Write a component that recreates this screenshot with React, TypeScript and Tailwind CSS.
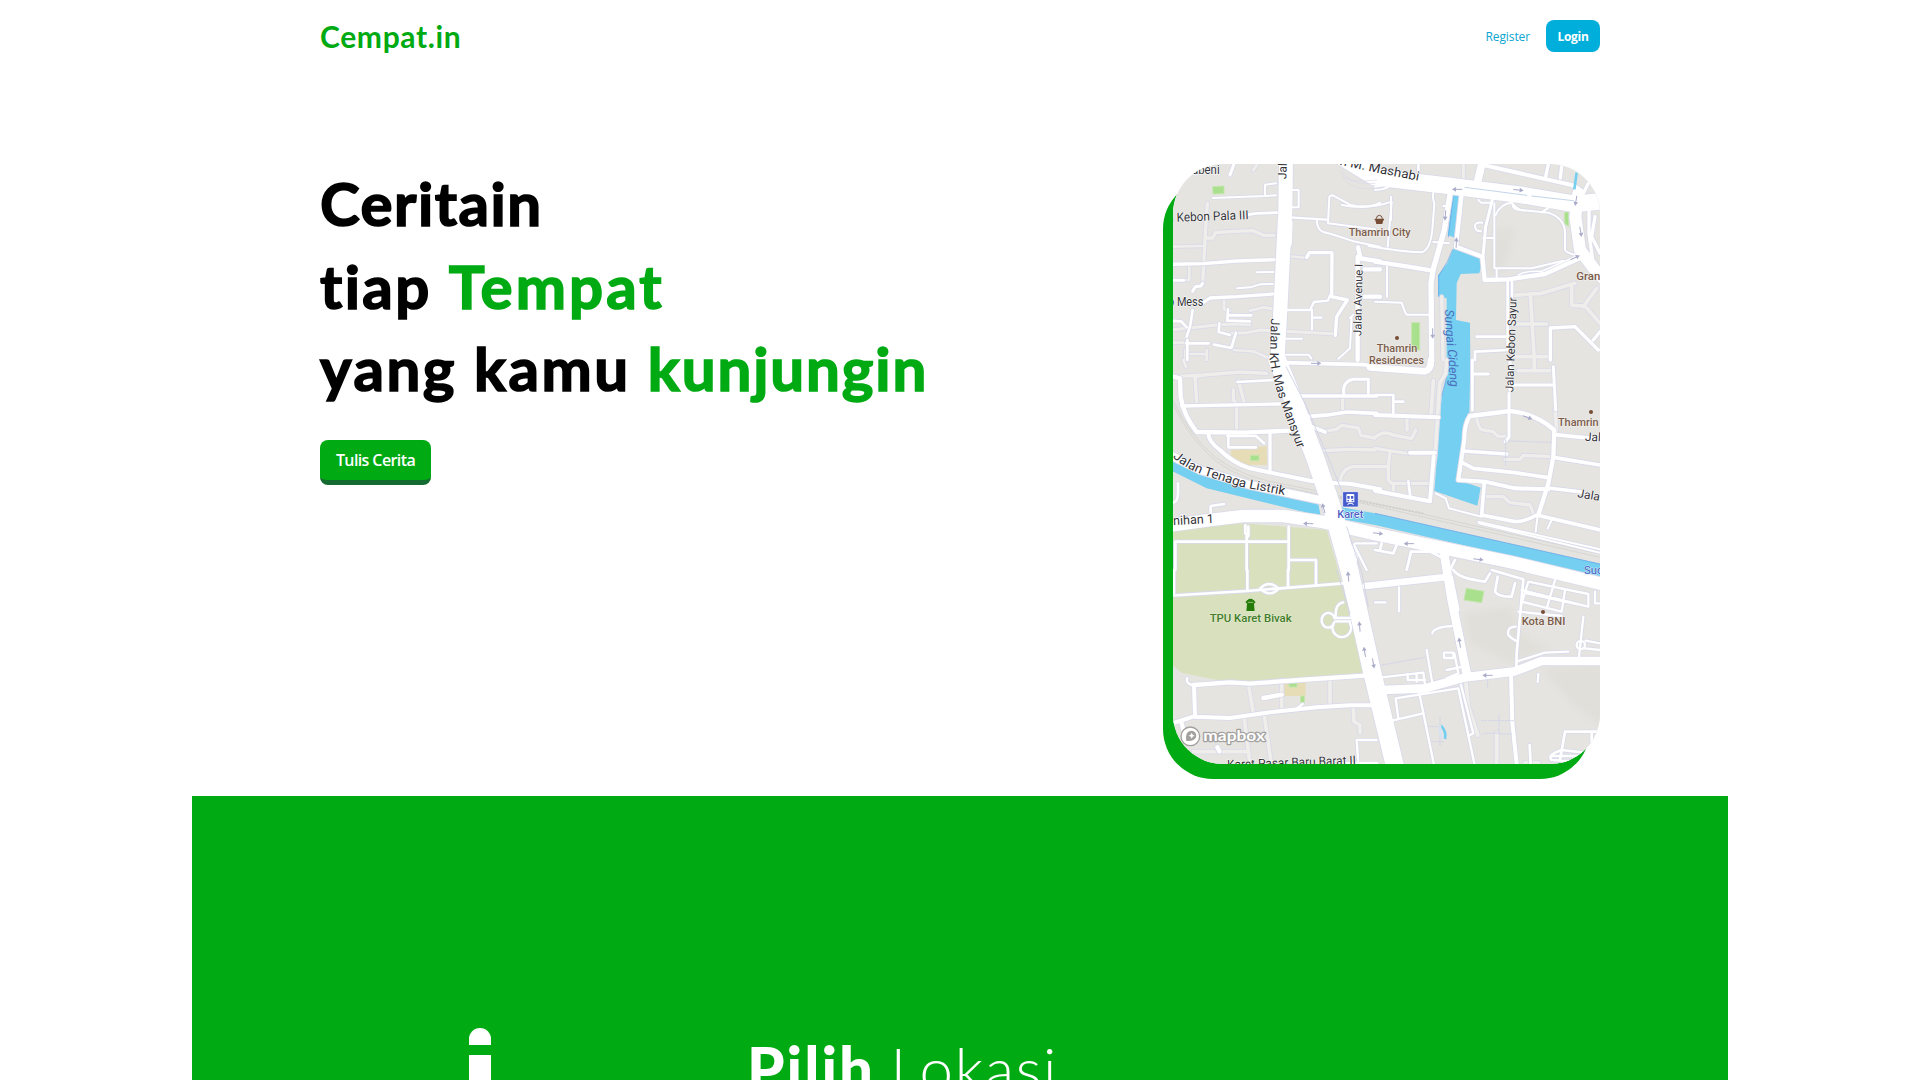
import React from "react";

type Road = [number, string];

/* Map units: three per CSS pixel. Roads are split into six tiles for readability. */
const tiles: { x: number; y: number; minor: Road[]; roads: Road[] }[] = [
  {
    x: 0,
    y: 0,
    minor: [
      [10, "M172 160L166 250L158 400"],
      [10, "M170 264H188L196 248L250 244L310 242L340 256H372"],
      [8, "M60 290L155 288"],
      [8, "M118 346V390H100"],
      [8, "M414 318L470 324L476 308"],
      [9, "M222 445V478L240 482M300 482L340 472L365 476"],
      [9, "M60 540L110 535L200 525L245 522L300 524M245 550L290 548L330 540L560 552"],
      [8, "M60 578H110M250 600L310 604L350 622M106 600V630M170 600V630M110 612H170"],
      [9, "M310 60L322 42L326 30"],
    ],
    roads: [
      [6, "M188 144L345 138L378 136"],
      [6, "M345 136V104L378 100"],
      [6, "M425 120H446V172H424"],
      [8, "M295 194L320 190L380 188"],
      [7, "M420 202L530 209"],
      [6, "M675 238L534 220L538 140Q546 132 556 140L600 164Q650 178 690 158"],
      [6, "M500 210Q502 240 520 246Q560 256 610 274L690 290"],
      [10, "M60 343L160 341L260 333L372 329"],
      [6, "M320 367L370 366M262 415L300 412L330 403L368 402"],
      [10, "M160 458L180 444L260 440L368 432"],
      [9, "M60 391H102M158 400L152 408L136 410L128 424"],
      [7, "M410 480H480L492 456L534 452L540 436M486 480V538M488 503H514"],
      [10, "M470 322L478 308H546L545 440L592 450L560 500L556 556"],
      [8, "M234 478L232 512L300 514M236 496H304M208 520L206 546L240 555M258 548L244 594L192 584M112 570V630M108 580H176M60 512L94 514L110 532M128 480L120 530L110 560"],
      [6, "M408 566H456M408 614H476L484 625"],
      [13, "M630 318L624 292M625 324L690 334M623 320V630M644 358H690M644 440H690"],
      [6, "M425 215L423 280L414 300M600 504L610 494M605 500L600 595L565 626"],
      [9, "M240 75L252 42"],
    ],
  },
  {
    x: 675,
    y: 0,
    minor: [
      [9, "M265 40V100"],
      [11, "M410 436L500 430L600 400M466 430L478 630M410 522H515M410 620H525M590 410V466L630 468L675 520M625 470L665 415"],
      [10, "M200 440L204 630"],
    ],
    roads: [
      [23, "M322 35L305 106"],
      [12, "M325 45L590 105L610 115"],
      [10, "M520 42L512 80M560 48L556 84M640 100L620 140M665 140L650 165"],
      [13, "M0 335L100 350L172 362"],
      [16, "M228 115L208 240L174 360L168 400L170 630"],
      [13, "M260 130L243 290L322 320L329 390L400 388L510 372L620 322"],
      [9, "M352 150L332 230L324 320"],
      [6, "M175 276L222 280"],
      [6, "M177 122Q170 140 178 160L172 240Q165 300 140 307Q80 305 -20 288M205 168H218"],
      [6, "M358 160V355H470L565 332M365 385V355M310 150L318 158H350M322 218Q298 216 300 230Q302 245 318 244M325 264H355"],
      [6, "M362 195Q376 160 412 158Q410 180 440 180L520 188Q570 205 570 250V300Q578 310 600 314M412 160Q430 182 450 182M500 187L525 170"],
      [6, "M-100 165Q-20 180 50 155M50 155L38 290M48 140V210"],
      [6, "M0 120Q40 120 65 92M0 110Q30 108 45 92M130 45V65"],
      [6, "M36 350V440M0 455L80 458Q90 490 95 494H165"],
      [8, "M398 394V600L300 605V630M411 390V440M305 560H395"],
      [10, "M526 630V534L600 530L670 600M675 545L655 570"],
      [10, "M655 345L642 250V180Q650 168 675 170M660 200L650 260L675 310"],
      [5, "M430 375Q450 362 500 364L600 320"],
      [7, "M130 42V65"],
    ],
  },
  {
    x: 0,
    y: 630,
    minor: [
      [10, "M70 50L160 45L270 36L350 40M160 45L135 50L140 125M250 90L250 120L260 130V205M265 60L282 125"],
      [10, "M520 214L560 208L575 196L625 204L632 226L675 234M520 272L600 268L675 270M570 365Q575 325 610 320H675M578 155V100"],
      [9, "M100 0L108 20"],
    ],
    roads: [
      [13, "M50 45L90 55L92 110Q100 165 140 216L280 218L420 212"],
      [10, "M95 138L390 132"],
      [8, "M262 66L370 60"],
      [8, "M232 228H318L342 250M235 226V262H318"],
      [10, "M360 215V330"],
      [12, "M176 216Q170 240 210 270Q250 310 300 325L480 362L560 370L600 371L690 388"],
      [11, "M400 8L640 14L690 22M450 108H680M470 170Q530 168 590 156L680 160M485 200L525 216"],
      [9, "M582 105Q575 65 610 58H655V100"],
      [8, "M84 370V400Q84 425 68 428M182 465V438L222 432M95 470V465"],
      [8, "M286 496V520L295 528V500M290 525V630M416 500V630M76 630V545H415M418 600H498V630"],
      [7, "M610 630L620 590Q600 550 620 550H680M615 560L650 630"],
    ],
  },
  {
    x: 675,
    y: 630,
    minor: [
      [11, "M175 62L168 165M215 0L212 40L194 70L180 290L165 380"],
      [10, "M0 232Q25 210 55 225L110 236L122 210M0 265L60 275L100 280M45 275L40 320H0M40 320V360L50 370H165M55 370V395M96 165V210"],
      [10, "M305 175Q312 210 325 210L355 215Q370 235 390 228M390 298H435L445 286L530 290M320 410H385L405 428L465 435L475 460"],
      [11, "M478 0V32M430 32H535M540 150L545 210"],
    ],
    roads: [
      [20, "M-15 22L150 34Q168 30 168 0"],
      [8, "M0 105H55V160M55 125H85M100 364L106 410"],
      [12, "M0 165L190 172M0 392L165 424L176 290M105 278H180"],
      [13, "M285 168L405 153Q480 160 538 210L535 290L520 370L490 465"],
      [12, "M285 168Q268 190 268 240L250 360L330 365L420 385L520 388"],
      [9, "M405 0V90M402 100V232L390 245M410 75H535M535 20L542 150M292 0V150M298 42H340"],
      [11, "M265 273L395 282M262 308L295 325L420 338L515 352M540 224L680 238M535 292L675 315M520 384L620 396"],
      [11, "M328 368L320 465L420 485Q450 485 485 465L675 510"],
      [6, "M182 400L212 415L222 445L320 470M310 485L675 568M312 490L675 578M488 465L482 515M530 480L518 506"],
      [8, "M0 570L55 580L65 555M95 630L108 575H165L195 590M15 570L20 550M240 600L225 630"],
    ],
  },
  {
    x: 0,
    y: 1260,
    minor: [
      [11, "M295 340L310 430M395 330V415M540 325V405M282 440L300 582M342 430L365 590M130 545H295M610 415L612 455L630 465V488"],
    ],
    roads: [
      [8, "M60 77L290 63L390 55L580 40"],
      [8, "M292 0V60M414 0V48M498 0V42M72 0V70"],
      [7, "M330 56Q357 28 386 56Q360 84 330 56Z"],
      [7, "M580 97Q555 100 557 140M556 144H600M556 154H600M554 145A20 22 0 1 0 550 165M552 158A28 28 0 1 0 600 160"],
      [13, "M130 345L240 337L300 341L450 330L655 316"],
      [12, "M132 345L135 438M60 462L130 440L240 444L350 428L500 412L600 406H675"],
      [7, "M112 324Q105 340 130 346M442 414L458 402M625 582L620 510H680"],
      [13, "M340 384L395 374M202 532L208 544M95 460L100 480M575 582H680"],
    ],
  },
  {
    x: 675,
    y: 1260,
    minor: [[12, "M272 330L280 410L308 495M365 490V582M450 578H490"]],
    roads: [
      [20, "M-28 48L205 22"],
      [26, "M208 -45L230 90L276 315"],
      [26, "M22 360L150 355L270 322L420 304L500 273H680"],
      [12, "M408 310L412 460L426 590"],
      [7, "M72 52V124M0 97H32M172 190Q175 172 230 168M155 240L172 340M20 322L145 308L150 345M98 312V330H150M125 312V335"],
      [7, "M207 248H235V264H207ZM238 250L250 310L215 325M215 300L265 290"],
      [7, "M62 385L250 355L300 590M132 365L178 590M62 385L70 445M50 452L145 430M258 345L295 490L285 495"],
      [8, "M230 20L250 120M235 0Q250 25 330 35L345 10M368 20L360 65Q370 80 410 80L420 40M350 0L445 28L425 250L424 295"],
      [7, "M460 35L640 72V110L440 60M455 70L640 110M440 95L560 125L570 60M460 35L440 100M540 30L515 115M430 125L560 138M660 65V100H675"],
      [7, "M422 170Q395 170 400 195Q408 205 422 212M424 275L510 248L580 245M625 140L612 260M605 225A12 12 0 1 0 630 225A12 12 0 1 0 605 225M632 212L675 220M630 235L675 240M490 312L488 336"],
      [8, "M464 525L467 585M555 570L570 485H665M650 490V520M675 510L650 550L560 540Q515 555 530 570L600 575M530 558H630"],
    ],
  },
];

const artery = [
  [42, "M408 20L406 180L390 500L382 640"],
  [54, "M382 630L422 730L498 930L542 1060L598 1260L665 1560L740 1870"],
  [24, "M50 910L150 960L300 1005L520 1052"],
  [38, "M50 1128L180 1110L280 1098L400 1098L520 1116L675 1152L1075 1235L1370 1305"],
  [50, "M570 18L675 82L900 108L1110 134L1275 162L1370 152"],
  [36, "M1285 130L1276 200L1290 300L1335 360L1370 395"],
] as Road[];

const arrows: [number, number, number][] = [
  [922, 118, 180], [1105, 120, 5], [1278, 152, 100], [1292, 245, 80], [886, 196, 95],
  [919, 278, -88], [848, 550, 90], [1275, 323, -25], [498, 640, 0], [1132, 802, 20],
  [521, 1075, -105], [475, 1121, 182], [777, 1181, 180], [684, 1150, 8], [985, 1228, 8],
  [595, 1280, -95], [629, 1430, -95], [644, 1506, -100], [670, 1540, 80],
  [929, 1478, -98], [1013, 1576, 180],
];

function RoadLayer({ kind, casing }: { kind: "minor" | "roads"; casing?: boolean }) {
  return (
    <>
      {tiles.map((t) => (
        <g key={`${t.x}-${t.y}`} transform={`translate(${t.x} ${t.y})`}>
          {t[kind].map(([w, d]) => (
            <path
              key={d}
              d={d}
              strokeWidth={casing ? w + 5 : w}
              stroke={casing ? "#d9daea" : kind === "minor" ? "#efeeea" : "#fff"}
            />
          ))}
        </g>
      ))}
    </>
  );
}

function CityMap() {
  return (
    <svg viewBox="69 42 1281 1800" className="block h-full w-full" aria-label="Peta Jakarta">
      <defs>
        <path id="mansyur" d="M363 505L359 620Q361 660 384 735L446 906" />
        <path id="listrik" d="M68 922Q110 960 180 981L270 1010L412 1037" />
        <path id="cideng" d="M885 478Q885 550 893 600L901 716" />
        <path id="mashabi" d="M568 44L675 67L815 94" />
        <filter id="soft"><feGaussianBlur stdDeviation="10" /></filter>
      </defs>
      <rect x="60" y="30" width="1300" height="1830" fill="#e5e4e0" />
      <g fill="#dcd9d2" opacity=".45" filter="url(#soft)">
        <path d="M1010 370L1040 240L1090 235L1060 370Z" />
        <path d="M940 1390L1080 1370L1130 1470L1200 1490L1080 1540L960 1480Z" />
        <path d="M1180 1560L1370 1540V1740L1270 1660Z" />
      </g>
      <path d="M60 1130L280 1120L530 1140L655 1575L300 1600L190 1588L95 1568L60 1540Z" fill="#d8e0bd" />
      <path d="M243 900L350 888L352 945H290L243 925ZM400 1598H467V1638H400Z" fill="#e6ddb7" />
      <g fill="#a9e08d" stroke="#c5e5ad" strokeWidth="3">
        <path d="M188 110L222 108V131L189 132ZM785 518H809V600H785ZM301 916H327V932H301ZM417 1599H441V1611H417ZM452 1638H463V1658H452ZM949 1315L1002 1324L995 1358L942 1350ZM1243 188L1256 185V230L1244 220Z" />
      </g>
      <g fill="none" stroke="#cfceca" strokeWidth="2">
        <path d="M69 750Q120 860 200 925Q280 985 420 1006L675 1060L1350 1212M69 762Q120 870 200 935Q280 995 420 1014L675 1068L1350 1222" />
        <path d="M560 1040L820 1090" strokeDasharray="6 4" strokeWidth="5" />
      </g>
      <path
        fill="#75cff1"
        d="M60 930L165 978L400 1030L505 1062L512 1098L170 1015L60 960ZM575 1072L675 1090L1370 1246V1292L1275 1262L675 1125L575 1108ZM908 134H930L912 262L893 256ZM910 296L993 326Q995 350 988 370L932 372L920 400L918 510L960 518L961 640L958 795L925 990L992 1013L982 1067L853 1023L875 740L890 680L890 445L864 438V376L892 340Z"
      />
      <path d="M908 298L892 335L866 378V440H880M895 262L910 136M675 1090L1350 1242M400 1030L505 1058M875 740L890 680" fill="none" stroke="#6a9eea" strokeWidth="2" />
      <g fill="none" strokeLinecap="round" strokeLinejoin="round">
        <RoadLayer kind="minor" casing />
        <RoadLayer kind="minor" />
        <RoadLayer kind="roads" casing />
        {artery.map(([w, d]) => <path key={d} d={d} strokeWidth={w + 5} stroke="#d9daea" />)}
        <RoadLayer kind="roads" />
        {artery.map(([w, d]) => <path key={d} d={d} strokeWidth={w} stroke="#fff" />)}
        <path d="M408 650L465 760L540 935L590 1060M590 1130L636 1270L655 1370M560 1260L600 1390" stroke="#d3d5e8" strokeWidth="3" />
        <path d="M945 112L1130 136M1145 138L1270 152" stroke="#c3d4e8" strokeWidth="3" />
        <path d="M575 60Q580 125 675 115M580 70Q590 105 675 100M588 80Q600 100 680 90" stroke="#d9daea" strokeWidth="2" />
        <path d="M695 1545L825 1522M1013 1590V1614M995 1712H1090M1047 1695V1750H1000M1050 1752H1085M1067 870V950M1078 873L1205 877M835 1730H870M845 1775H880M870 1700V1790" stroke="#d3d5e8" strokeWidth="3" strokeDasharray="6 4" />
        <path d="M1280 68L1273 118" stroke="#75cff1" strokeWidth="8" strokeLinecap="butt" />
        <path d="M873 1727Q890 1745 885 1767" stroke="#75cff1" strokeWidth="8" strokeLinecap="butt" />
        <path d="M870 1730Q868 1750 878 1765" stroke="#d9e4f2" strokeWidth="8" />
      </g>
      <g fill="none" stroke="#a9abc9" strokeWidth="3">
        {arrows.map(([x, y, r]) => (
          <g key={`${x}${y}`} transform={`translate(${x} ${y}) rotate(${r})`}>
            <path d="M-15 0H8" />
            <path d="M4 -7L16 0L4 7Z" fill="#a9abc9" stroke="none" />
          </g>
        ))}
      </g>
      <g
        className="font-[Roboto,sans-serif]"
        fontSize="38"
        fill="#34343a"
        stroke="#ffffff"
        strokeWidth="3"
        strokeLinejoin="round"
        paintOrder="stroke"
      >
        <text x="126" y="73" fontSize="36" textLength="83" lengthAdjust="spacingAndGlyphs">abeni</text>
        <text transform="translate(52 216) rotate(-2)" textLength="244" lengthAdjust="spacingAndGlyphs">n Kebon Pala III</text>
        <text x="54" y="467" fontSize="36" textLength="106" lengthAdjust="spacingAndGlyphs">o Mess</text>
        <text transform="translate(409 88) rotate(-88)" fontSize="36">Jalan</text>
        <text transform="translate(634 558) rotate(-89)" fontSize="34" textLength="216" lengthAdjust="spacingAndGlyphs">Jalan Avenue I</text>
        <text transform="translate(1090 727) rotate(-88)" fontSize="35" textLength="284" lengthAdjust="spacingAndGlyphs">Jalan Kebon Sayur</text>
        <text><textPath href="#mansyur" textLength="404" lengthAdjust="spacingAndGlyphs">Jalan KH. Mas Mansyur</textPath></text>
        <text><textPath href="#listrik" textLength="358" lengthAdjust="spacingAndGlyphs">Jalan Tenaga Listrik</textPath></text>
        <text><textPath href="#mashabi" textLength="242" lengthAdjust="spacingAndGlyphs">h M. Mashabi</textPath></text>
        <text transform="translate(70 1125) rotate(-3)" textLength="122" lengthAdjust="spacingAndGlyphs">nihan 1</text>
        <text transform="translate(1304 872) rotate(3)" fontSize="36">Jalan</text>
        <text transform="translate(1281 1041) rotate(10)" fontSize="36">Jalan</text>
        <text transform="translate(232 1857) rotate(-2)" textLength="386" lengthAdjust="spacingAndGlyphs">Karet Pasar Baru Barat II</text>
        <g stroke="none" fill="#4a70bd" fontStyle="italic">
          <text><textPath href="#cideng" textLength="234" lengthAdjust="spacingAndGlyphs">Sungai Cideng</textPath></text>
        </g>
        <text x="1302" y="1273" fontSize="34" fill="#4a5fc0" stroke="#cfe6f8">Sudirman</text>
        <g fill="#7b5c4b" fontWeight="500" fontSize="34" stroke="#f4f2ef">
          <text x="596" y="258" textLength="186" lengthAdjust="spacingAndGlyphs">Thamrin City</text>
          <text x="680" y="606" textLength="122" lengthAdjust="spacingAndGlyphs">Thamrin</text>
          <text x="657" y="641" textLength="165" lengthAdjust="spacingAndGlyphs">Residences</text>
          <text x="1279" y="390">Grand</text>
          <text x="1224" y="828" textLength="122" lengthAdjust="spacingAndGlyphs">Thamrin</text>
          <text x="1115" y="1425" textLength="131" lengthAdjust="spacingAndGlyphs">Kota BNI</text>
        </g>
        <text x="562" y="1104" textLength="78" lengthAdjust="spacingAndGlyphs" fill="#5362c6" fontWeight="500" fontSize="33">Karet</text>
        <text x="179" y="1416" textLength="246" lengthAdjust="spacingAndGlyphs" fill="#427d2d" stroke="#e6edcf" fontWeight="500" fontSize="34">TPU Karet Bivak</text>
      </g>
      <g fill="#774d36">
        <circle cx="741" cy="564" r="6" />
        <circle cx="1323" cy="786" r="6" />
        <circle cx="1179" cy="1386" r="6" />
        <path d="M674 206H702V211H700L697 222H679L676 211H674Z" />
        <path d="M679 206Q680 196 688 196Q696 196 697 206" fill="none" stroke="#774d36" strokeWidth="3" />
      </g>
      <rect x="578" y="1025" width="47" height="46" rx="3" fill="#465bcc" stroke="#fff" strokeWidth="2" />
      <path fillRule="evenodd" fill="#fff" d="M592 1032H610Q613 1032 613 1036V1055Q613 1057 610 1057H592Q589 1057 589 1055V1036Q589 1032 592 1032ZM592 1038V1046H599V1038ZM603 1038V1046H610V1038ZM592 1050V1054H597V1050ZM605 1050V1054H610V1050Z" />
      <path d="M593 1065L596 1060H607L610 1065" fill="none" stroke="#fff" strokeWidth="3" />
      <path d="M287 1355Q290 1350 298 1346H305Q313 1350 316 1355V1360H312L314 1383H289L291 1360H287Z" fill="#247b08" stroke="#e7eed0" strokeWidth="3" paintOrder="stroke" />
      <path d="M293 1357H310" stroke="#d8e0bd" strokeWidth="2" />
      <g>
        <circle cx="121" cy="1759" r="28" fill="#fff" stroke="#a2a19f" strokeWidth="4" />
        <path d="M109 1773Q104 1742 125 1742Q139 1744 139 1758Q136 1775 109 1773Z" fill="#a2a19f" />
        <path d="M125 1748L128 1754L134 1757L128 1760L125 1766L122 1760L116 1757L122 1754Z" fill="#fff" />
        <text x="160" y="1773" textLength="185" lengthAdjust="spacingAndGlyphs" fontSize="44" fontWeight="700" fill="#fff" stroke="#a2a19f" strokeWidth="7" strokeLinejoin="round" paintOrder="stroke" className="font-[Lato,sans-serif]">mapbox</text>
      </g>
    </svg>
  );
}

export default function App() {
  return (
    <div className="h-[1080px] w-full overflow-hidden bg-white font-['Open_Sans',sans-serif]">
      <div className="mx-auto w-[1536px]">
        <header className="mx-32 flex h-[72px] items-center justify-between">
          <a className="font-[Lato,sans-serif] text-[30px] leading-9 font-bold tracking-[0.65px] text-[#00aa13]">Cempat.in</a>
          <nav className="flex items-center gap-4 text-xs">
            <a className="pt-0.5 tracking-[-0.1px] text-[#0aa5d0]">Register</a>
            <button className="h-8 w-[54px] rounded-lg bg-[#00aedb] pt-0.5 font-bold tracking-[-0.3px] text-white">Login</button>
          </nav>
        </header>
        <main className="mx-32 flex h-[724px] items-start justify-between pt-[90px]">
          <div>
            <h1 className="font-[Lato,sans-serif] text-[60px] leading-[82.5px] font-bold text-black [-webkit-text-stroke-width:1.6px] [stroke-linejoin:round]">
              <span className="block tracking-[1.5px]">Ceritain</span>
              <span className="block tracking-[2.4px]">tiap <span className="tracking-[3.1px] text-[#00aa13]">Tempat</span></span>
              <span className="block tracking-[2.5px]">yang kamu <span className="tracking-[1.9px] text-[#00aa13]">kunjungin</span></span>
            </h1>
            <button className="mt-[30px] h-[45px] w-[111px] rounded-lg border-b-[5px] border-[#136b31] bg-[#00aa13] text-base font-semibold tracking-[-0.6px] text-white">Tulis Cerita</button>
          </div>
          <div className="mt-0.5 h-[600px] w-[427px] rounded-[50px] shadow-[-10px_15px_0_#00aa13]">
            <div className="h-full overflow-hidden rounded-[50px]">
              <CityMap />
            </div>
          </div>
        </main>
        <section className="flex h-[284px] overflow-hidden bg-[#00aa13] text-white">
          <div className="ml-[277px] flex w-[22px] shrink-0 flex-col gap-[10px] pt-[232px]">
            <div className="h-[17px] shrink-0 rounded-t-full bg-white" />
            <div className="h-[60px] shrink-0 bg-white" />
          </div>
          <h2 className="ml-[256px] pt-[231px] font-[Lato,sans-serif] text-[60px] leading-[82.5px] whitespace-nowrap">
            <span className="font-black tracking-[2px]">Pilih</span> <span className="font-light tracking-[1.7px]">Lokasi</span>
          </h2>
        </section>
      </div>
    </div>
  );
}
